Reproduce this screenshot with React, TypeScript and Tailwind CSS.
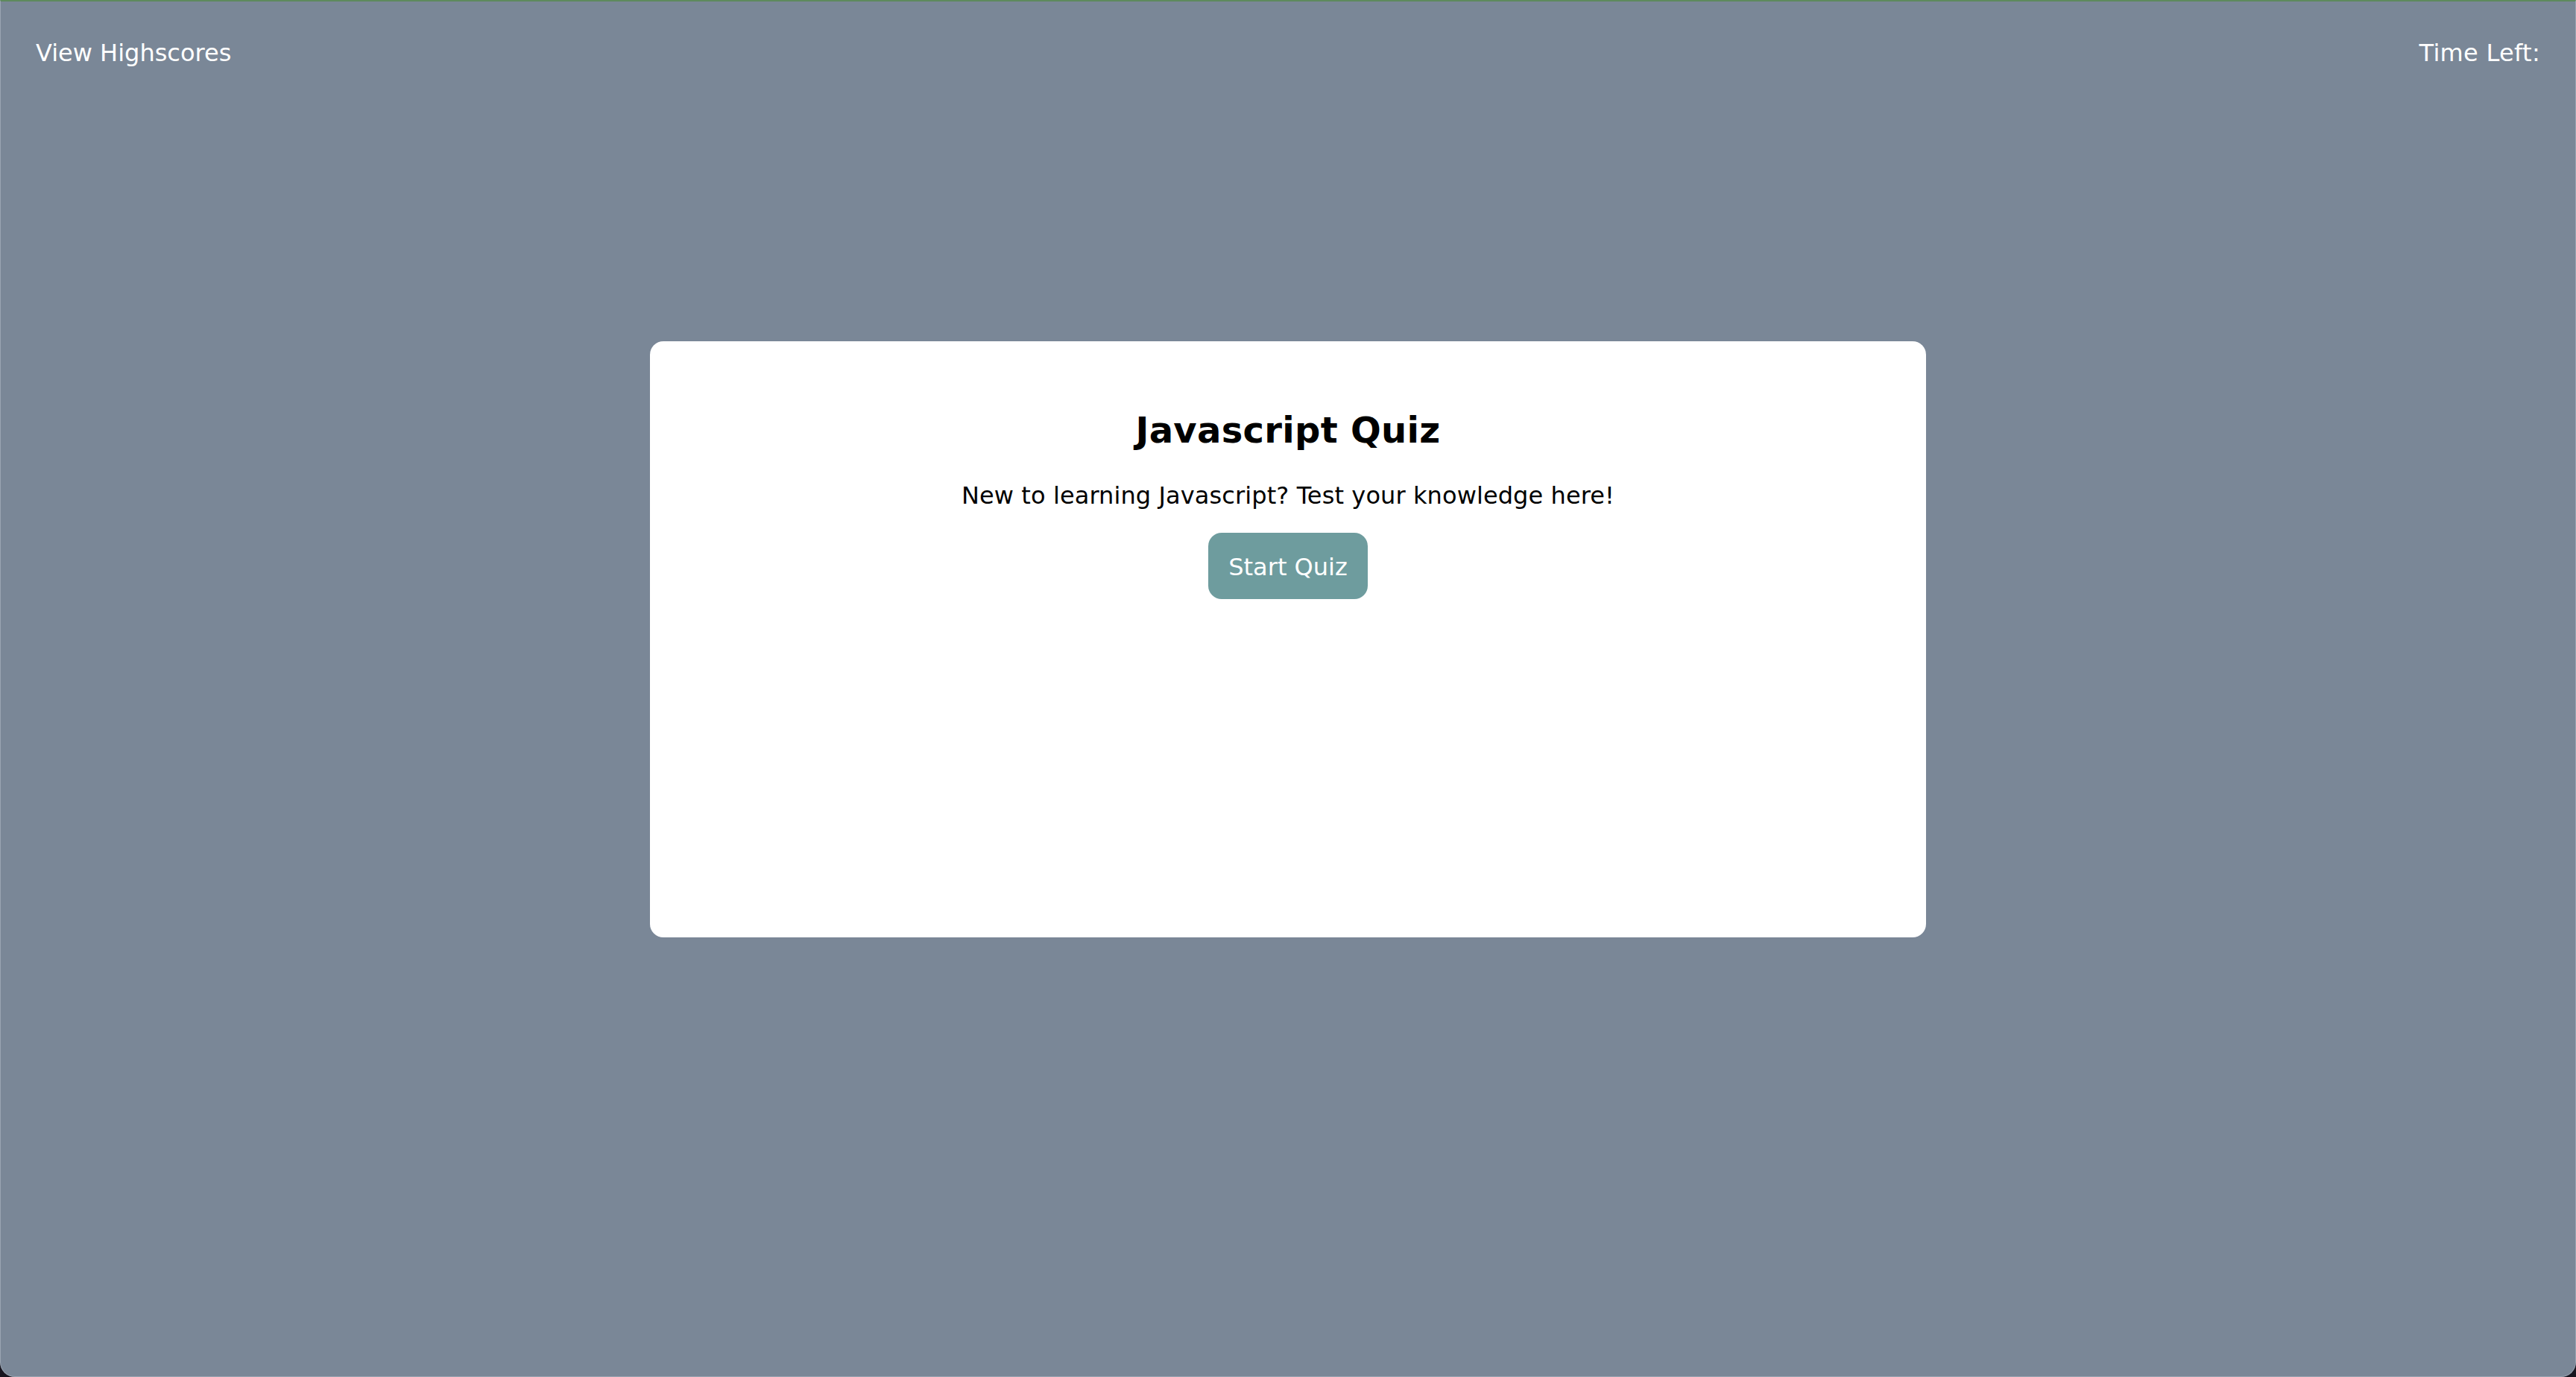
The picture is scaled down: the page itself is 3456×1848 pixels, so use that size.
import React from "react";

export default function App() {
  return (
    <div className="h-screen w-full bg-[#17151f]" style={{ fontFamily: '"DejaVu Sans", Verdana, sans-serif' }}>
      <div className="h-full w-full flex flex-col bg-[#7a8797] border-t-2 border-t-[#5e8a5c] border-x border-x-[#9aa5b2] border-b border-b-[#9aa5b2] rounded-b-[20px] overflow-hidden">
        <header className="flex justify-between px-[47px] pt-[51px] text-white text-[32px] leading-[37px]">
          <span>View Highscores</span>
          <span className="tracking-[0.3px]">Time Left:</span>
        </header>
        <main className="flex justify-center pt-[368px]">
          <div className="w-[1712px] h-[800px] bg-white rounded-[18px] flex flex-col items-center pt-[91px]">
            <h2 className="text-[48px] leading-[56px] font-bold text-black tracking-[0.3px]">Javascript Quiz</h2>
            <p className="mt-[42px] text-[32px] leading-[37px] text-black tracking-[0.1px]">New to learning Javascript? Test your knowledge here!</p>
            <button className="mt-[31px] bg-[#6e9c9e] text-white text-[32px] leading-[37px] px-[27px] pt-[28px] pb-[24px] rounded-[18px]">Start Quiz</button>
          </div>
        </main>
      </div>
    </div>
  );
}
